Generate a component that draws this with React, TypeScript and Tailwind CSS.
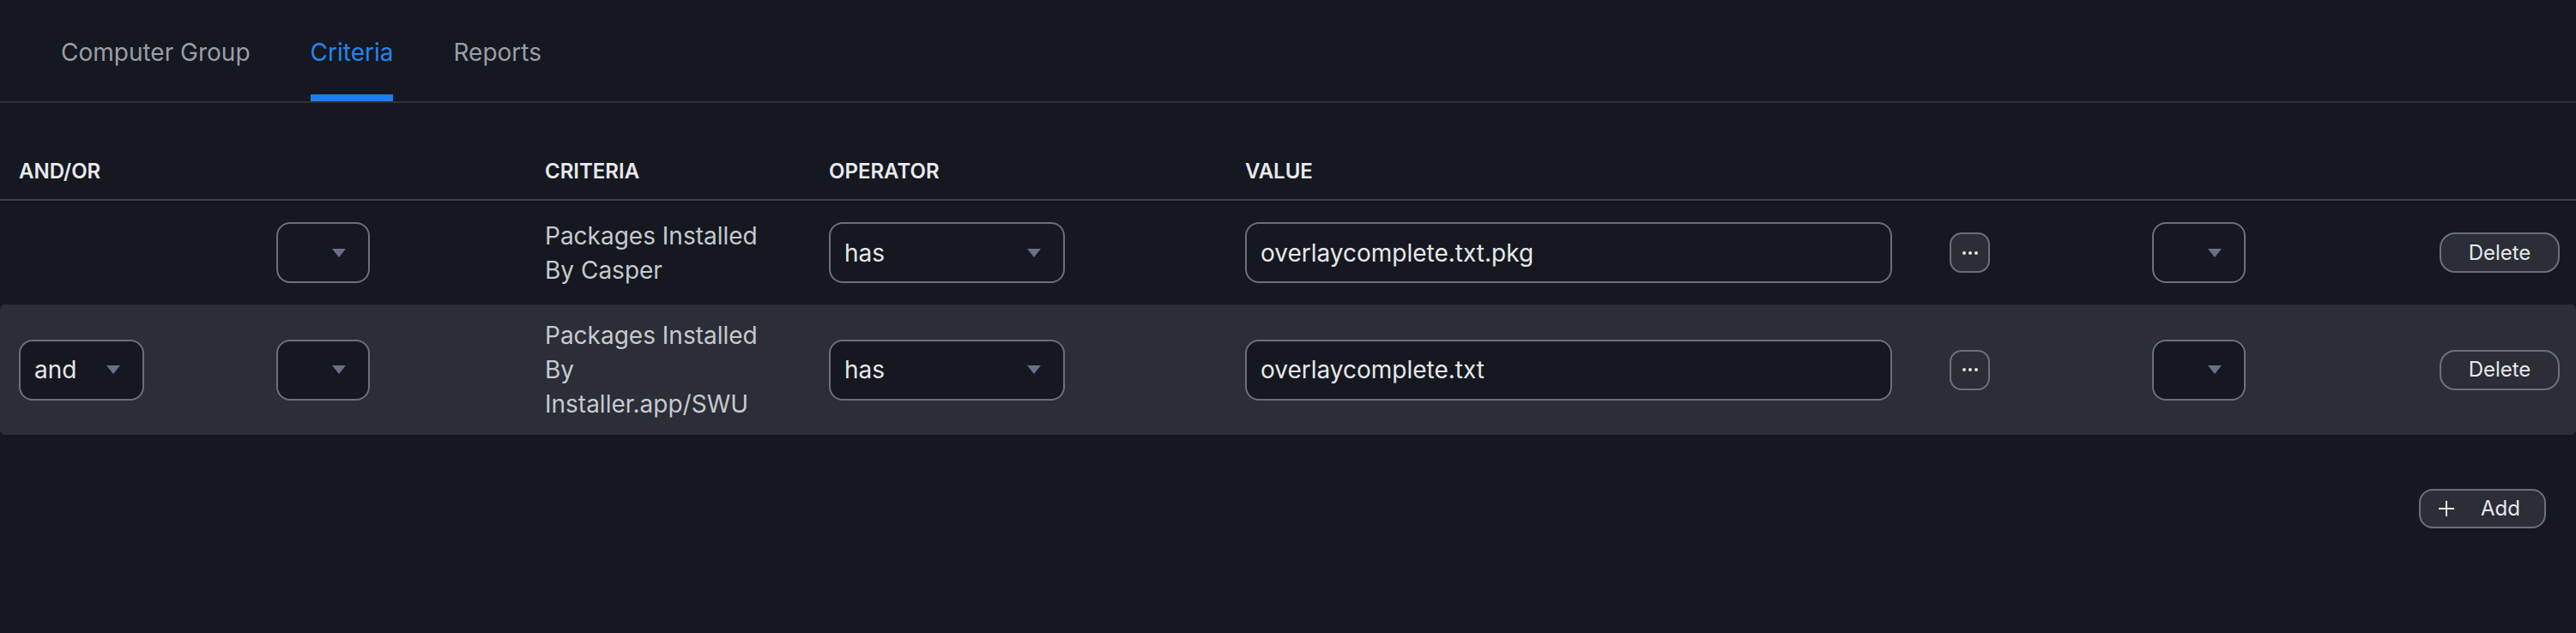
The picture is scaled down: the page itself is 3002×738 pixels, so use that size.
import React from "react";

const cols =
  "grid grid-cols-[300px_313px_331px_485px_821px_236px_335px_140px] pl-[22px] pr-[19px]";

type Row = {
  join?: string;
  criteria: string[];
  operator: string;
  value: string;
  shaded?: boolean;
};

const rows: Row[] = [
  { criteria: ["Packages Installed", "By Casper"], operator: "has", value: "overlaycomplete.txt.pkg" },
  {
    join: "and",
    criteria: ["Packages Installed", "By", "Installer.app/SWU"],
    operator: "has",
    value: "overlaycomplete.txt",
    shaded: true,
  },
];

export default function App() {
  return (
    <div className="min-h-[738px] w-[3002px] bg-[#151820] font-['Inter',sans-serif] text-[#e6e7ea]">
      <Tabs />
      <div className="mt-[48px]">
        <div className={`${cols} h-[66px] items-center border-b-2 border-[#3b3e46] text-[24px] font-semibold uppercase text-[#e8e9ec]`}>
          <div>AND/OR</div>
          <div />
          <div>Criteria</div>
          <div>Operator</div>
          <div>Value</div>
        </div>
        {rows.map((r, i) => (
          <CriteriaRow key={i} row={r} />
        ))}
      </div>
      <div className="mt-[63px] flex justify-end pr-[35px]">
        <button className="flex h-[46px] items-center rounded-[16px] border-2 border-[#6c6f77] bg-[#2b2e37] pl-[20px] pr-[28px] text-[24px] text-[#e6e7ea]">
          <svg width="20" height="20" viewBox="0 0 20 20" className="mr-[30px]">
            <path d="M10 1v18M1 10h18" stroke="#e6e7ea" strokeWidth="2" />
          </svg>
          Add
        </button>
      </div>
    </div>
  );
}

function Tabs() {
  const tabs = ["Computer Group", "Criteria", "Reports"];
  return (
    <div className="flex h-[120px] gap-[70px] border-b-2 border-[#2d3038] pl-[71px]">
      {tabs.map((t) => {
        const active = t === "Criteria";
        return (
          <div
            key={t}
            className={
              active
                ? "flex h-[118px] items-center border-b-[8px] border-[#1c7fef] pt-[12px] text-[28px] text-[#2585f0]"
                : "flex h-[118px] items-center pt-[4px] text-[28px] text-[#9a9ea6]"
            }
          >
            {t}
          </div>
        );
      })}
    </div>
  );
}

function CriteriaRow({ row }: { row: Row }) {
  return (
    <div
      className={`${cols} min-h-[121px] items-center py-[16px] ${row.shaded ? "rounded-[6px] bg-[#2b2e37]" : ""}`}
    >
      <div>{row.join && <Select label={row.join} width="w-[146px]" />}</div>
      <div>
        <Select width="w-[109px]" />
      </div>
      <div className="text-[28px] leading-[40px] text-[#c6c9ce]">
        {row.criteria.map((l) => (
          <div key={l}>{l}</div>
        ))}
      </div>
      <div>
        <Select label={row.operator} width="w-[275px]" />
      </div>
      <div>
        <div className="flex h-[71px] w-[754px] items-center rounded-[16px] border-2 border-[#6c6f77] bg-[#151820] pl-[16px] text-[28px] text-[#e6e7ea]">
          {row.value}
        </div>
      </div>
      <div>
        <button className="flex h-[47px] w-[47px] items-center justify-center gap-[3px] rounded-[14px] border-2 border-[#6c6f77] bg-[#2b2e37]">
          <span className="h-[4px] w-[4px] rounded-full bg-[#e6e7ea]" />
          <span className="h-[4px] w-[4px] rounded-full bg-[#e6e7ea]" />
          <span className="h-[4px] w-[4px] rounded-full bg-[#e6e7ea]" />
        </button>
      </div>
      <div>
        <Select width="w-[109px]" />
      </div>
      <div>
        <button className="flex h-[47px] w-[140px] items-center justify-center rounded-[18px] border-2 border-[#6c6f77] bg-[#2b2e37] text-[24px] text-[#e6e7ea]">
          Delete
        </button>
      </div>
    </div>
  );
}

function Select({ label, width }: { label?: string; width: string }) {
  return (
    <div
      className={`flex h-[71px] ${width} items-center justify-between rounded-[16px] border-2 border-[#6c6f77] bg-[#151820] pl-[16px] pr-[26px] text-[28px] text-[#e6e7ea]`}
    >
      <span>{label ?? ""}</span>
      <svg width="16" height="10" viewBox="0 0 16 10">
        <path d="M0 0h16L8 10z" fill="#6a7089" />
      </svg>
    </div>
  );
}
